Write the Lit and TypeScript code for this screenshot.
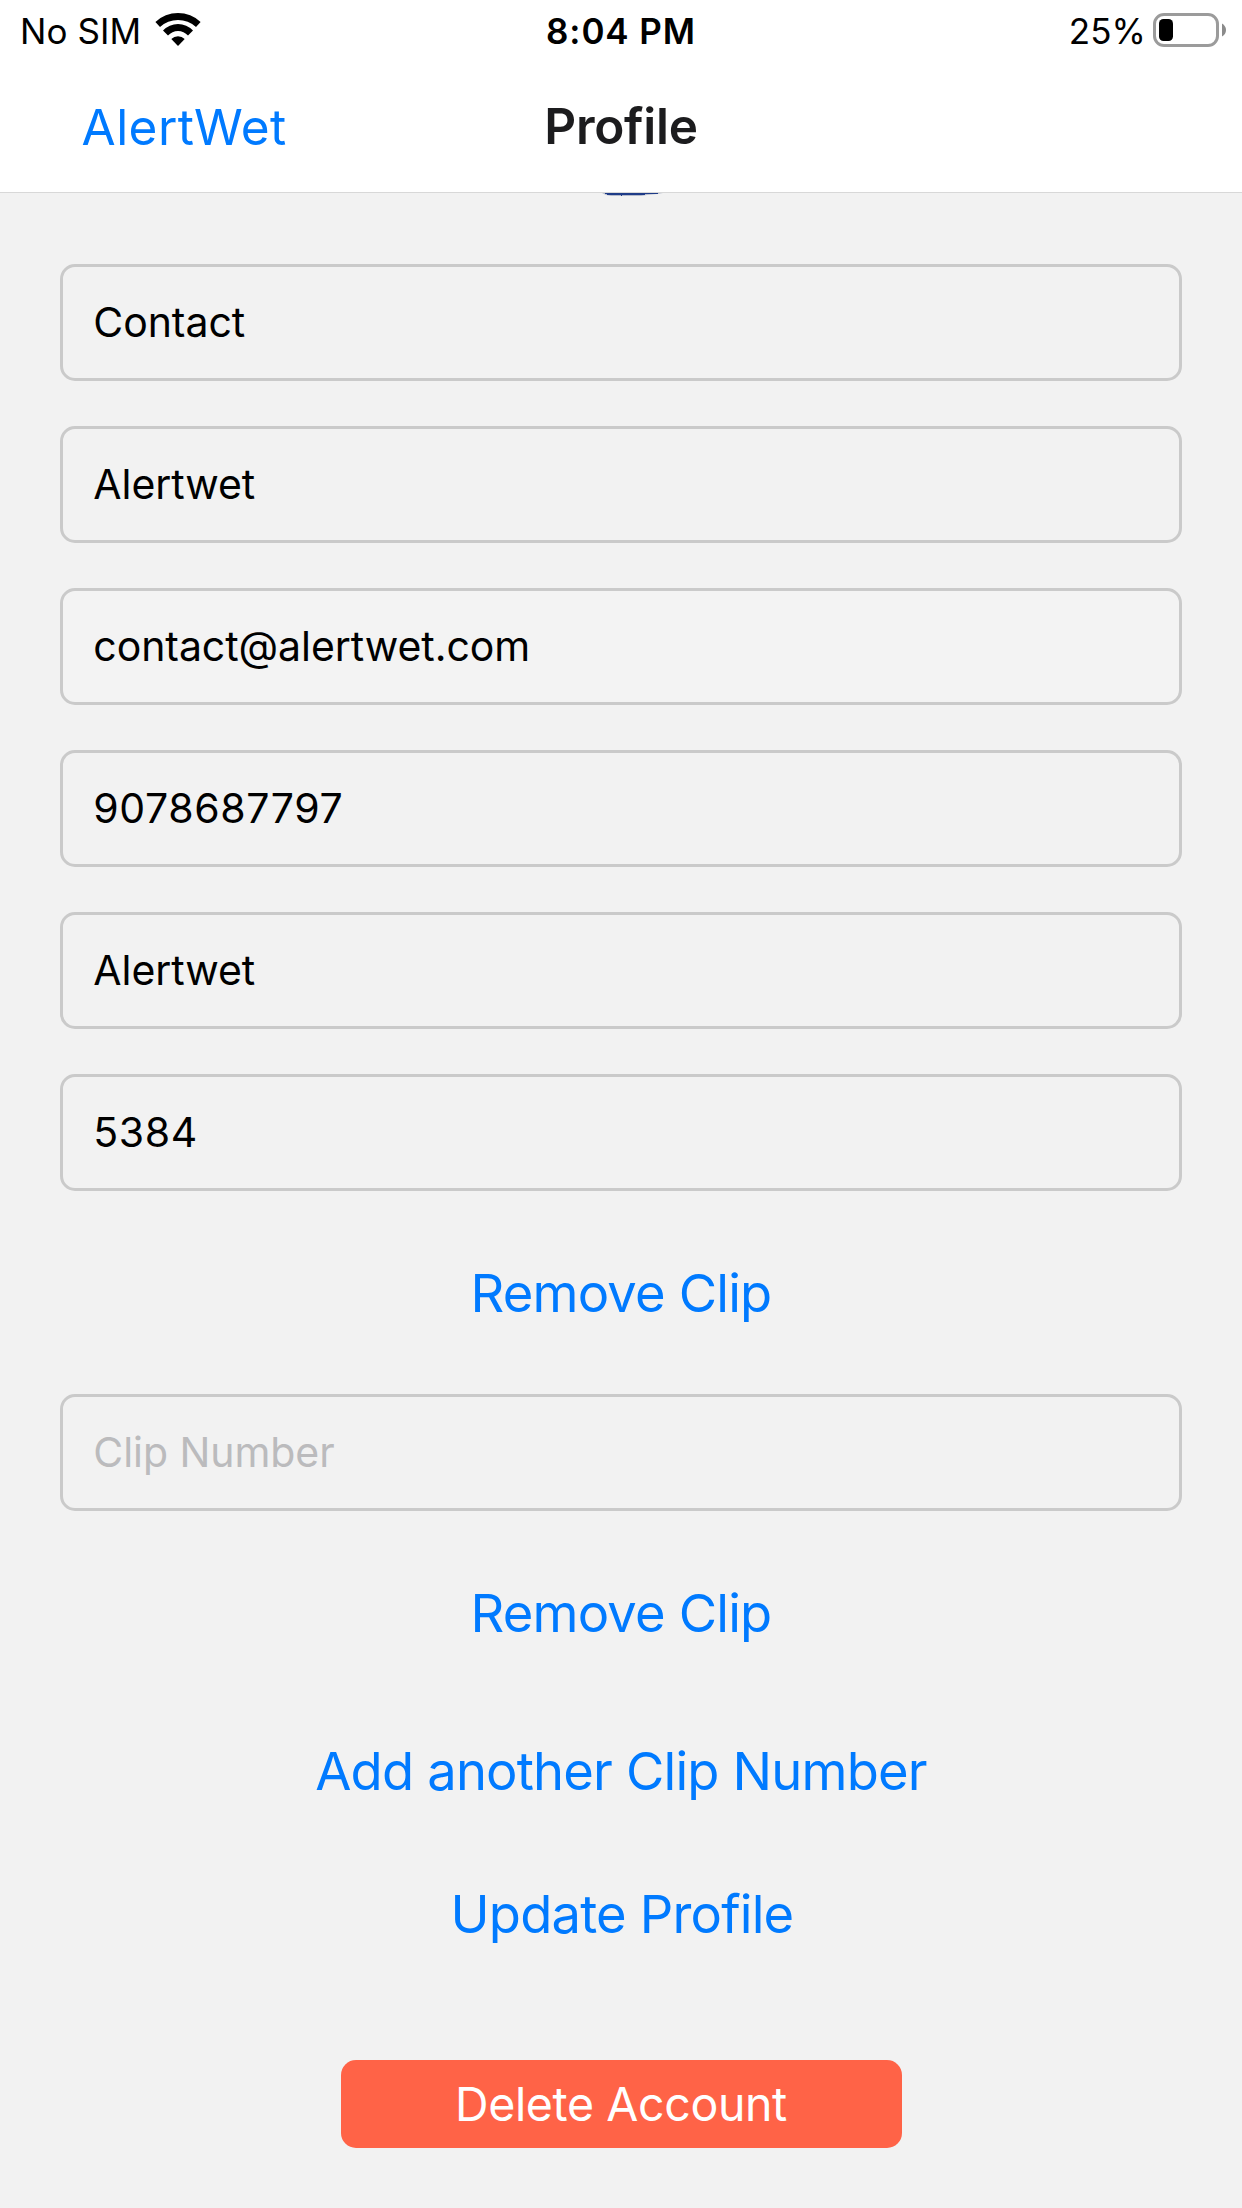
import { LitElement, html, css } from "lit";
import { customElement, property } from "lit/decorators.js";

@customElement("status-bar")
class StatusBar extends LitElement {
  static styles = css`
    :host {
      display: grid;
      grid-template-columns: 1fr auto 1fr;
      height: 62px;
      padding: 0 15px;
      box-sizing: border-box;
      font-size: 35px;
      line-height: 62px;
      color: #000;
      white-space: nowrap;
    }
    .carrier,
    .power {
      display: flex;
      align-items: flex-start;
    }
    .carrier {
      padding-left: 5px;
      letter-spacing: 0.1px;
    }
    .power {
      justify-content: flex-end;
      letter-spacing: 0.1px;
    }
    .time {
      font-weight: 560;
      letter-spacing: 0.9px;
    }
    .wifi {
      width: 46px;
      height: 34px;
      margin: 13px 0 0 13.5px;
    }
    .battery {
      width: 74px;
      height: 34px;
      margin: 13px 0 0 7px;
    }
  `;

  render() {
    return html`
      <div class="carrier">
        <span>No SIM</span>
        <svg class="wifi" viewBox="0 0 46 34">
          <path d="M0.4 9 A32.9 32.9 0 0 1 45.6 9 L41 14 A26.6 26.6 0 0 0 5 14 Z" />
          <path d="M8 17.5 A20.6 20.6 0 0 1 38 17.5 L33 22.5 A13.4 13.4 0 0 0 13 22.5 Z" />
          <path d="M16.3 26 A9.7 9.7 0 0 1 29.7 26 L23 33 Z" />
        </svg>
      </div>
      <div class="time">8:04 PM</div>
      <div class="power">
        <span>25%</span>
        <svg class="battery" viewBox="0 0 74 34">
          <rect x="1.5" y="1.5" width="63" height="31" rx="9.5" fill="none" stroke="#9b9b9b" stroke-width="3" />
          <rect x="6" y="6" width="14" height="22" rx="4.5" />
          <path d="M69 10.5 Q73 13 73 17 Q73 21 69 23.5 Z" fill="#8b8b8b" />
        </svg>
      </div>
    `;
  }
}

@customElement("nav-header")
class NavHeader extends LitElement {
  static styles = css`
    :host {
      display: grid;
      grid-template-columns: 1fr auto 1fr;
      height: 131px;
      box-sizing: border-box;
      border-bottom: 1px solid #d8d8d8;
      font-size: 49.5px;
      white-space: nowrap;
    }
    .back {
      padding-left: 81.5px;
      line-height: 130px;
      letter-spacing: 0.48px;
      color: #007aff;
    }
    .title {
      line-height: 128px;
      font-weight: 600;
      letter-spacing: -0.25px;
      color: #1c1c1e;
    }
  `;

  render() {
    return html`
      <div class="back">AlertWet</div>
      <div class="title">Profile</div>
    `;
  }
}

@customElement("text-field")
class TextField extends LitElement {
  static styles = css`
    :host {
      display: block;
      height: 117px;
      box-sizing: border-box;
      border: 3px solid #cacaca;
      border-radius: 15px;
      padding-left: 30.3px;
      font-size: 41px;
      line-height: 111px;
      color: #000;
      white-space: nowrap;
    }
    .words,
    .hint {
      letter-spacing: -0.06px;
    }
    .hint {
      color: #bbbbbd;
    }
    .digits {
      letter-spacing: 0.6px;
    }
  `;

  @property() value = "";
  @property() hint = "";

  render() {
    if (!this.value) return html`<span class="hint">${this.hint}</span>`;
    return html`<span class=${/^\d+$/.test(this.value) ? "digits" : "words"}>${this.value}</span>`;
  }
}

@customElement("app-root")
class AppRoot extends LitElement {
  static styles = css`
    :host {
      display: flex;
      flex-direction: column;
      height: 2208px;
      overflow: hidden;
      background: #f2f2f2;
      font-family: Inter, "Liberation Sans", sans-serif;
    }
    .top {
      background: #fff;
    }
    .avatar {
      width: 68px;
      height: 4px;
      margin-left: 601px;
    }
    .form {
      display: flex;
      flex-direction: column;
      padding: 67px 60px 0;
    }
    .fields {
      display: flex;
      flex-direction: column;
      gap: 45px;
    }
    .email {
      background: #f3f3f3;
    }
    .link {
      text-align: center;
      font-size: 52.5px;
      line-height: 64px;
      letter-spacing: -0.82px;
      color: #007aff;
    }
    .remove {
      height: 203px;
      line-height: 205px;
    }
    .add {
      margin-top: 25px;
    }
    .update {
      margin-top: 79px;
      padding-left: 2px;
    }
    .delete {
      align-self: center;
      width: 561px;
      margin-top: 114px;
      border-radius: 15px;
      background: #ff6347;
      color: #fff;
      font-size: 46.5px;
      line-height: 88px;
      letter-spacing: -0.38px;
      text-align: center;
    }
  `;

  private profile = ["Contact", "Alertwet", "contact@alertwet.com", "9078687797", "Alertwet", "5384"];

  render() {
    return html`
      <div class="top">
        <status-bar></status-bar>
        <nav-header></nav-header>
      </div>
      <svg class="avatar" viewBox="0 0 68 4">
        <path d="M1 0 H62 L56 1 L46 2 L40 3 H10 L5 2 Z" fill="#b4bacb" />
        <path d="M4 0 H57 V1 H44 V2 H21 V3 H20 V2 H6 V1 H4 Z" fill="#1f3c88" />
      </svg>
      <div class="form">
        <div class="fields">
          ${this.profile.map(
            (v) => html`<text-field class=${v.includes("@") ? "email" : ""} .value=${v}></text-field>`
          )}
        </div>
        <div class="link remove">Remove Clip</div>
        <text-field hint="Clip Number"></text-field>
        <div class="link remove">Remove Clip</div>
        <div class="link add">Add another Clip Number</div>
        <div class="link update">Update Profile</div>
        <div class="delete">Delete Account</div>
      </div>
    `;
  }
}
